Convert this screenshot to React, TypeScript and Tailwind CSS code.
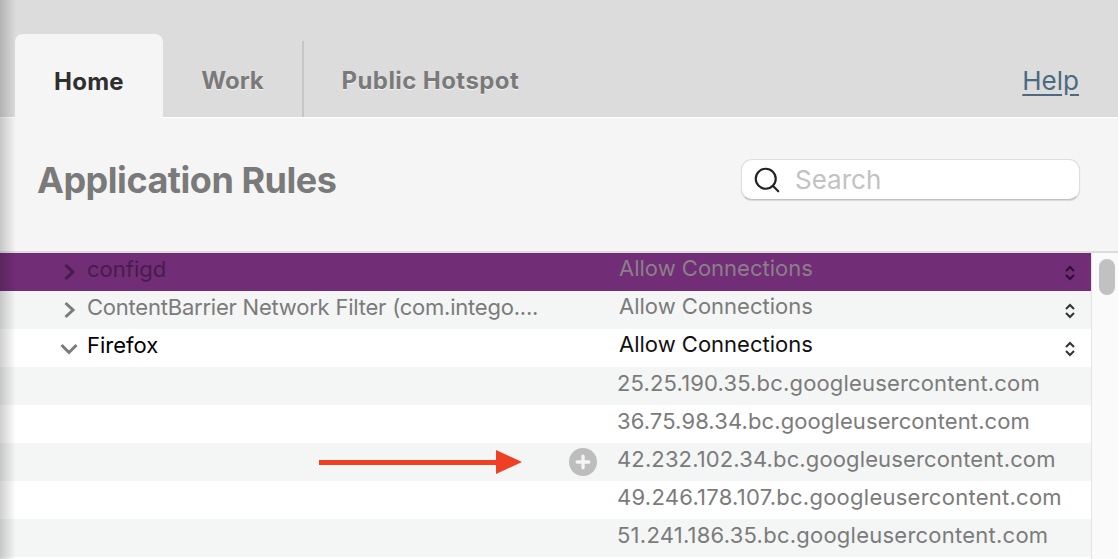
import { Plus, Search } from "lucide-react";

type Row = {
  name?: string;
  value: string;
  bg: string;
  nameColor?: string;
  valueColor: string;
  open?: boolean;
  chevron?: string;
  stepper?: string;
  add?: boolean;
  narrow?: boolean;
  tracking?: string;
};

const ROWS: Row[] = [
  { name: "configd", value: "Allow Connections", bg: "bg-[#712d76]", nameColor: "text-[#471c4c]", valueColor: "text-[#8a8088]", chevron: "text-[#471c4c]", stepper: "text-[#2a1030]" },
  { name: "ContentBarrier Network Filter (com.intego....", value: "Allow Connections", bg: "bg-[#f4f5f5]", nameColor: "text-[#7b7b7b]", valueColor: "text-[#7b7b7b]", chevron: "text-[#7b7b7b]", stepper: "text-[#333333]", narrow: true },
  { name: "Firefox", value: "Allow Connections", bg: "bg-white", nameColor: "text-black", valueColor: "text-[#111111]", open: true, chevron: "text-[#7b7b7b]", stepper: "text-[#333333]" },
  { value: "25.25.190.35.bc.googleusercontent.com", bg: "bg-[#f4f5f5]", valueColor: "text-[#7b7b7b]", tracking: "tracking-[0.16px]" },
  { value: "36.75.98.34.bc.googleusercontent.com", bg: "bg-white", valueColor: "text-[#7b7b7b]", tracking: "tracking-[0.11px]" },
  { value: "42.232.102.34.bc.googleusercontent.com", bg: "bg-[#f4f5f5]", valueColor: "text-[#7b7b7b]", add: true, tracking: "tracking-[0.13px]" },
  { value: "49.246.178.107.bc.googleusercontent.com", bg: "bg-white", valueColor: "text-[#7b7b7b]", tracking: "tracking-[0.26px]" },
  { value: "51.241.186.35.bc.googleusercontent.com", bg: "bg-[#f4f5f5]", valueColor: "text-[#7b7b7b]", tracking: "tracking-[0.24px]" },
  { value: "", bg: "bg-white", valueColor: "text-[#7b7b7b]" },
];

function Chevron({ open, className }: { open?: boolean; className?: string }) {
  return (
    <svg viewBox="0 0 18 18" className={`size-[18px] ${className}`} fill="none" stroke="currentColor" strokeWidth="3">
      {open ? <path d="M1.5 6l7.5 7.5L16.5 6" /> : <path d="M5.5 2l7.5 7-7.5 7" />}
    </svg>
  );
}

function Stepper({ className }: { className?: string }) {
  return (
    <svg viewBox="0 0 12 18" className={`mt-0.5 h-[18px] w-3 ${className}`} fill="none" stroke="currentColor" strokeWidth="2">
      <path d="M2 7l4-4 4 4M2 11l4 4 4-4" />
    </svg>
  );
}

function RuleRow({ row }: { row: Row }) {
  return (
    <div className={`relative flex h-[38px] shrink-0 items-center text-[22px] ${row.bg}`}>
      <div className="flex w-[619px] shrink-0 items-center">
        <div className="flex w-[87px] shrink-0 justify-end pr-[9px]">
          {row.name && <Chevron open={row.open} className={row.chevron} />}
        </div>
        <span className={`truncate pb-1.5 ${row.nameColor} ${row.narrow ? "tracking-[-0.22px]" : ""}`}>{row.name}</span>
      </div>
      {row.name ? (
        <span className={`flex-1 pb-2 ${row.valueColor}`}>{row.value}</span>
      ) : (
        <span className={`-ml-0.5 flex-1 pb-1.5 ${row.tracking} ${row.valueColor}`}>{row.value}</span>
      )}
      {row.stepper && <Stepper className={`mr-[15px] ${row.stepper}`} />}
      {row.add && (
        <>
          <div className="absolute top-[7px] left-[319px] flex items-center">
            <div className="h-[5px] w-[177px] bg-[#ee4123]" />
            <div className="h-0 w-0 border-y-[12px] border-l-[26px] border-y-transparent border-l-[#ee4123]" />
          </div>
          <div className="absolute top-[5px] left-[569px] flex size-7 items-center justify-center rounded-full bg-[#bdbdbd]">
            <Plus className="size-5 text-[#f4f5f5]" strokeWidth={4} />
          </div>
        </>
      )}
    </div>
  );
}

export default function App() {
  return (
    <div className="relative flex h-[559px] w-[1118px] flex-col overflow-hidden bg-[#f5f5f5] font-['Inter',sans-serif]">
      <div className="flex h-[118px] shrink-0 items-end border-b border-white bg-[#dcdcdc] pl-[15px]">
        <div className="z-10 -mb-px flex h-[84px] w-[148px] items-center justify-center rounded-t-lg bg-[#f5f5f5] pt-3 text-2xl font-bold tracking-[0.25px] text-[#2f2f2f]">
          Home
        </div>
        <div className="flex h-[76px] w-[141px] items-center justify-center border-r-2 border-[#c6c6c6] pt-1 text-2xl font-bold text-[#7a7a7a] [text-shadow:0_1px_1px_rgba(255,255,255,0.7)]">
          Work
        </div>
        <div className="flex h-[76px] items-center pt-1 pl-[37.5px] text-2xl font-bold tracking-[0.42px] text-[#7a7a7a] [text-shadow:0_1px_1px_rgba(255,255,255,0.7)]">
          Public Hotspot
        </div>
        <a className="mt-auto mr-[39px] mb-[23px] ml-auto text-[26px] leading-none text-[#4a6b82] underline underline-offset-4">Help</a>
      </div>

      <div className="flex h-[133px] shrink-0 items-center justify-between pr-[38px] pl-[37px]">
        <h1 className="pb-2.5 text-[36px] font-bold tracking-[-0.48px] text-[#7a7a7a]">Application Rules</h1>
        <div className="mb-2.5 flex h-[41px] w-[339px] items-center rounded-[11px] border border-[#dedede] border-b-[#c0c0c0] bg-white pl-2.5 shadow-[0_1px_1px_rgba(0,0,0,0.12)]">
          <Search className="size-[30px] text-[#222222]" strokeWidth={1.7} />
          <span className="ml-[13px] text-[26px] text-[#c2c2c2]">Search</span>
        </div>
      </div>

      <div className="flex min-h-0 flex-1 border-t-2 border-[#dddddd]">
        <div className="flex w-[1091px] shrink-0 flex-col">
          {ROWS.map((row, i) => (
            <RuleRow key={i} row={row} />
          ))}
        </div>
        <div className="flex-1 border-l border-[#e4e4e4] bg-[#fafafa] pt-1.5 pl-[7px]">
          <div className="h-9 w-4 rounded-full bg-[#c1c1c1]" />
        </div>
      </div>

      <div className="pointer-events-none absolute inset-y-0 left-0 w-4 bg-gradient-to-r from-[#00000030] to-transparent" />
    </div>
  );
}
